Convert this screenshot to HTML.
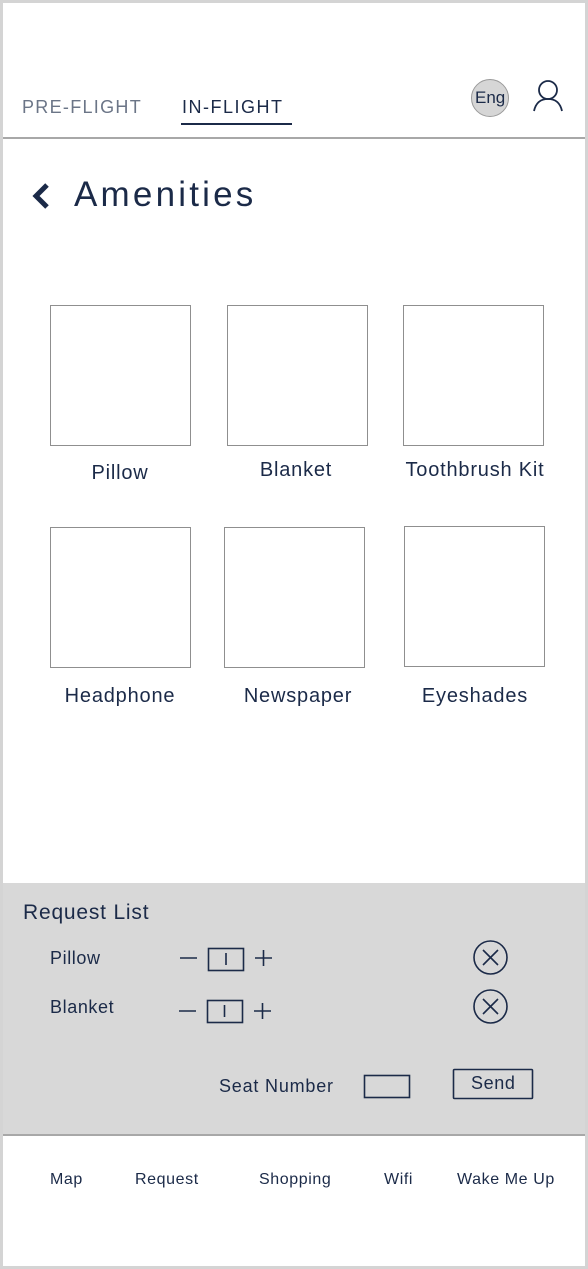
<!DOCTYPE html>
<html><head><meta charset="utf-8"><style>
*{margin:0;padding:0;box-sizing:border-box}
body{width:588px;height:1269px;background:#fff;position:relative;overflow:hidden;font-family:"Liberation Sans",sans-serif;color:#1b2a48}
.frame{position:absolute;left:0;top:0;width:588px;height:1269px;border:3px solid #d4d4d4}
.t{position:absolute;white-space:nowrap;line-height:1}
.box{position:absolute;width:141px;height:141px;border:1.5px solid #8f8f8f;background:#fff}
.lbl{position:absolute;width:200px;text-align:center;font-size:20px;letter-spacing:0.8px;line-height:1}
.ft{position:absolute;top:1172px;font-size:16px;letter-spacing:0.6px;line-height:1}
</style></head><body>
<div class="frame"></div>
<div class="t" style="left:22px;top:98px;font-size:18px;letter-spacing:1.3px;color:#6b7587">PRE-FLIGHT</div>
<div class="t" style="left:182px;top:98px;font-size:18px;letter-spacing:1.5px">IN-FLIGHT</div>
<div style="position:absolute;left:181px;top:123px;width:111px;height:2px;background:#1b2a48"></div>
<div style="position:absolute;left:471px;top:79px;width:38px;height:38px;border-radius:50%;background:#d6d6d6;border:1.5px solid #9a9a9a"></div>
<div class="t" style="left:475px;top:89px;font-size:17px">Eng</div>
<svg style="position:absolute;left:530px;top:79px" width="36" height="34" viewBox="0 0 36 34"><circle cx="18" cy="11" r="9" fill="none" stroke="#1b2a48" stroke-width="1.8"/><path d="M4 32 C6 23 11 20 18 20 C25 20 30 23 32 32" fill="none" stroke="#1b2a48" stroke-width="1.8"/></svg>
<div style="position:absolute;left:3px;top:137px;width:582px;height:2px;background:#a8a8a8"></div>
<svg style="position:absolute;left:30px;top:182px" width="22" height="30" viewBox="0 0 22 30"><path d="M17 3 L6 14 L17 25" fill="none" stroke="#1b2a48" stroke-width="5"/></svg>
<div class="t" style="left:74px;top:177px;font-size:35px;letter-spacing:3.2px">Amenities</div>

<div class="box" style="left:50px;top:305px"></div>
<div class="box" style="left:227px;top:305px"></div>
<div class="box" style="left:403px;top:305px"></div>
<div class="lbl" style="left:20px;top:463px">Pillow</div>
<div class="lbl" style="left:196px;top:460px">Blanket</div>
<div class="lbl" style="left:375px;top:460px">Toothbrush Kit</div>
<div class="box" style="left:50px;top:527px"></div>
<div class="box" style="left:224px;top:527px"></div>
<div class="box" style="left:404px;top:526px"></div>
<div class="lbl" style="left:20px;top:686px">Headphone</div>
<div class="lbl" style="left:198px;top:686px">Newspaper</div>
<div class="lbl" style="left:375px;top:686px">Eyeshades</div>

<div style="position:absolute;left:3px;top:883px;width:582px;height:252px;background:#d8d8d8"></div>
<div style="position:absolute;left:3px;top:1134px;width:582px;height:2px;background:#a8a8a8"></div>
<div class="t" style="left:23px;top:902px;font-size:21px;letter-spacing:0.8px">Request List</div>
<div class="t" style="left:50px;top:949px;font-size:18px;letter-spacing:0.6px">Pillow</div>
<div class="t" style="left:50px;top:998px;font-size:18px;letter-spacing:0.6px">Blanket</div>
<svg style="position:absolute;left:0;top:0" width="588" height="1269">
<g stroke="#1b2a48" fill="none" stroke-width="1.6">
<path d="M180 958 H197 M255 958 H272 M263.5 950 V966"/>
<rect x="208.5" y="948.5" width="35" height="22"/>
<path d="M226 953 V965"/>
<path d="M179 1011 H196 M254 1011 H271 M262.5 1003 V1019"/>
<rect x="207.5" y="1000.5" width="35" height="22"/>
<path d="M224.5 1005 V1017"/>
<circle cx="490.5" cy="957.5" r="16.5"/>
<path d="M483 950 L498 965 M498 950 L483 965"/>
<circle cx="490.5" cy="1006.5" r="16.5"/>
<path d="M483 999 L498 1014 M498 999 L483 1014"/>
<rect x="364.5" y="1075.5" width="45" height="22"/>
<rect x="453.5" y="1069.5" width="79" height="29" rx="1"/>
</g></svg>
<div class="t" style="left:219px;top:1077px;font-size:18px;letter-spacing:0.8px">Seat Number</div>
<div class="t" style="left:471px;top:1074px;font-size:18px;letter-spacing:0.6px">Send</div>

<div class="ft" style="left:50px">Map</div>
<div class="ft" style="left:135px">Request</div>
<div class="ft" style="left:259px">Shopping</div>
<div class="ft" style="left:384px">Wifi</div>
<div class="ft" style="left:457px">Wake Me Up</div>
</body></html>
